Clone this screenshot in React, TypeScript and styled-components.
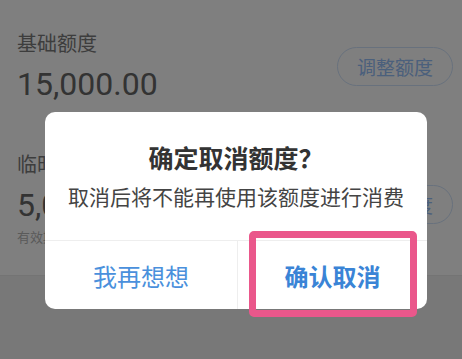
import styled, { createGlobalStyle } from 'styled-components';

const GlobalStyle = createGlobalStyle`
  html, body {
    margin: 0;
    padding: 0;
  }
  body {
    font-family: Roboto, "Noto Sans CJK SC", sans-serif;
  }
`;

function App() {
  return (
    <Page>
      <GlobalStyle />
      <Card>
        <Section $top={30}>
          <Row>
            <Column>
              <Label>基础额度</Label>
              <Amount>15,000.00</Amount>
            </Column>
            <PillButton $align="center">调整额度</PillButton>
          </Row>
        </Section>
        <Section $top={48}>
          <Row>
            <Column>
              <Label>临时额度</Label>
              <Amount>5,000.00</Amount>
            </Column>
            <PillButton $align="flex-end">调整额度</PillButton>
          </Row>
          <Note>有效期至 2020-12-31</Note>
        </Section>
      </Card>
      <Mask />
      <Dialog>
        <DialogBody>
          <Title>确定取消额度？</Title>
          <Message>取消后将不能再使用该额度进行消费</Message>
        </DialogBody>
        <Actions>
          <ActionButton>我再想想</ActionButton>
          <ActionButton $primary>确认取消</ActionButton>
        </Actions>
      </Dialog>
      <Highlight />
    </Page>
  );
}

const Page = styled.div`
  position: relative;
  width: 462px;
  height: 359px;
  overflow: hidden;
  background-color: #f0f0f0;
`;

/* Underlying page */

const Card = styled.div`
  height: 276px;
  box-sizing: border-box;
  padding: 0 9px 0 17px;
  background-color: #ffffff;
  border-bottom: 1px solid #e8e8e8;
`;

const Section = styled.div<{ $top: number }>`
  padding-top: ${({ $top }) => $top}px;
`;

const Row = styled.div`
  display: flex;
  justify-content: space-between;
  align-items: center;
`;

const Column = styled.div`
  display: flex;
  flex-direction: column;
  gap: 7px;
`;

const Label = styled.div`
  color: #7a7a7a;
  font-size: 20px;
  line-height: 28px;
`;

const Amount = styled.div`
  color: #666666;
  font-family: Roboto, sans-serif;
  font-size: 32px;
  line-height: 38px;
`;

const PillButton = styled.div<{ $align: string }>`
  align-self: ${({ $align }) => $align};
  display: flex;
  align-items: center;
  justify-content: center;
  width: 116px;
  height: 39px;
  box-sizing: border-box;
  color: #96c0f8;
  font-size: 19px;
  border: 1px solid #d0e2fa;
  border-radius: 20px;
`;

const Note = styled.div`
  margin-top: 5px;
  color: #b4b4b4;
  font-size: 13px;
  line-height: 18px;
`;

const Mask = styled.div`
  position: absolute;
  inset: 0;
  background-color: rgba(0, 0, 0, 0.5);
`;

/* Dialog */

const Dialog = styled.div`
  position: absolute;
  top: 112px;
  left: 45px;
  width: 382px;
  height: 197px;
  display: flex;
  flex-direction: column;
  background-color: #ffffff;
  border-radius: 10px;
  overflow: hidden;
`;

const DialogBody = styled.div`
  display: flex;
  flex-direction: column;
  align-items: center;
  gap: 7px;
  padding: 28px 0 29px;
  border-bottom: 1px solid #eeeeee;
`;

const Title = styled.div`
  color: #333333;
  font-family: "Noto Sans CJK SC", sans-serif;
  font-weight: 700;
  font-size: 25px;
  line-height: 34px;
`;

const Message = styled.div`
  color: #444444;
  font-family: "Noto Sans CJK SC", sans-serif;
  font-size: 21px;
  line-height: 30px;
`;

const Actions = styled.div`
  flex: 1;
  display: grid;
  grid-template-columns: 192px 1fr;
`;

const ActionButton = styled.div<{ $primary?: boolean }>`
  display: flex;
  align-items: center;
  justify-content: center;
  color: ${({ $primary }) => ($primary ? '#3a84d6' : '#4a90dc')};
  font-family: "Noto Sans CJK SC", sans-serif;
  font-weight: ${({ $primary }) => ($primary ? 700 : 400)};
  font-size: 24px;
  & + & {
    border-left: 1px solid #eeeeee;
  }
`;

const Highlight = styled.div`
  position: absolute;
  top: 231px;
  left: 249px;
  width: 168px;
  height: 86px;
  box-sizing: border-box;
  border: 7px solid #ea578b;
  border-radius: 5px;
`;

export default App;
